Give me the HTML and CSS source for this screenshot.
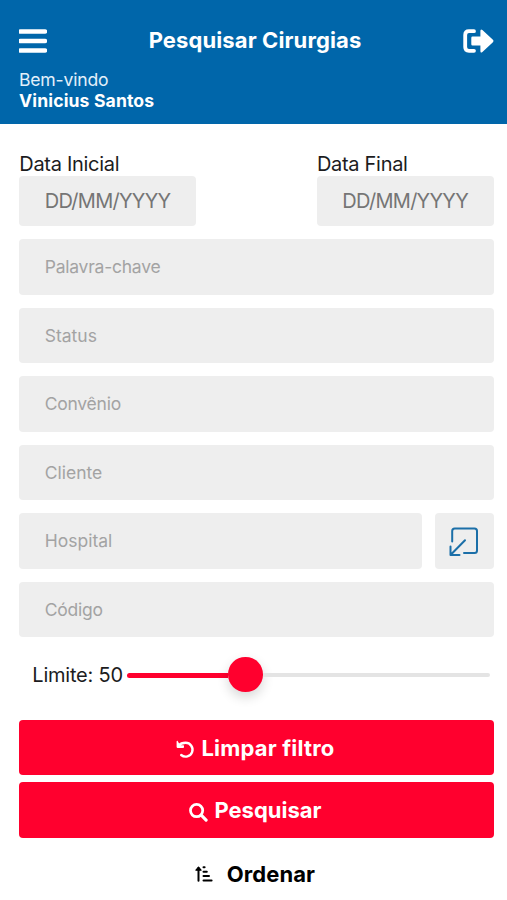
FILE: index.html
```html
<!DOCTYPE html>
<html lang="pt-BR">
<head>
<meta charset="utf-8">
<title>Pesquisar Cirurgias</title>
<link rel="stylesheet" href="styles.css">
</head>
<body>
<header class="header">
  <div class="bar">
    <svg class="menu" viewBox="0 0 28 24"><path d="M1.5 2.5H26M1.5 12H26M1.5 21.5H26" stroke="#fff" stroke-width="4.6" stroke-linecap="round"/></svg>
    <h1 class="title">Pesquisar Cirurgias</h1>
    <svg class="logout" viewBox="0 0 31 24"><path d="M11 2.2H6Q2.2 2.2 2.2 6V18Q2.2 21.8 6 21.8H11" fill="none" stroke="#fff" stroke-width="3.8" stroke-linecap="round"/><path d="M9.5 7.4H17.4V2Q17.4-.5 19.4 1L29.9 10.8Q31 12 29.9 13.2L19.4 23Q17.4 24.5 17.4 22V16.6H9.5Q8.3 16.6 8.3 15.3V8.7Q8.3 7.4 9.5 7.4Z" fill="#fff"/></svg>
  </div>
  <div class="hello">Bem-vindo</div>
  <div class="user">Vinicius Santos</div>
</header>
<main class="form">
  <div class="dates">
    <div class="date"><div class="label">Data Inicial</div><div class="date-field">DD/MM/YYYY</div></div>
    <div class="date"><div class="label">Data Final</div><div class="date-field">DD/MM/YYYY</div></div>
  </div>
  <div class="fields">
    <div class="field tight">Palavra-chave</div>
    <div class="field">Status</div>
    <div class="field tight">Convênio</div>
    <div class="field">Cliente</div>
    <div class="row">
      <div class="field grow">Hospital</div>
      <div class="field pick"><svg class="resize" viewBox="0 0 30 30"><path d="M3.2 14.5V4Q3.2 1.5 5.7 1.5H25.5Q28 1.5 28 4V23.5Q28 26 25.5 26H15M16 13.2L1.5 28M1.5 19.5V28H10.5" fill="none" stroke="#1b6fa8" stroke-width="2" stroke-linecap="round" stroke-linejoin="round"/></svg></div>
    </div>
    <div class="field tight">Código</div>
  </div>
  <div class="limit">
    <span class="limit-text">Limite: 50</span>
    <div class="track"><div class="fill"></div><div class="thumb"></div><div class="rest"></div></div>
  </div>
  <div class="actions">
    <div class="btn"><svg class="undo" viewBox="0 0 19 19"><path d="M2.3 5.8Q5 2.8 9.6 2.8A6.9 6.9 0 1 1 5.2 15" fill="none" stroke="#fff" stroke-width="2.4" stroke-linecap="round"/><path d="M.6 1.6Q.6.7 1.5.8L3.1 3.4L5.2 5.2H7.4Q8.1 5.3 8 6.2V7.2Q7.9 7.9 7.1 7.9H1.4Q.6 7.9.6 7.1Z" fill="#fff"/></svg><span class="b-clear">Limpar filtro</span></div>
    <div class="btn"><svg class="search" viewBox="0 0 18 18"><circle cx="7.2" cy="7.2" r="5.8" fill="none" stroke="#fff" stroke-width="2.6"/><path d="M11.6 11.6L16.2 16.2" stroke="#fff" stroke-width="3" stroke-linecap="round"/></svg><span class="b-search">Pesquisar</span></div>
  </div>
  <div class="sort"><svg class="order" viewBox="0 0 18 16"><path d="M3.5 14.8V2M8.5 1.3H9.6M8.5 5.7H11.8M8.5 10H14M8.5 14.4H16.6" fill="none" stroke="#000" stroke-width="2" stroke-linecap="round"/><path d="M.9 4.2L3.5 1L6.1 4.2Z" stroke="#000" stroke-width="1.1" stroke-linejoin="round"/></svg><span>Ordenar</span></div>
</main>
</body>
</html>
```
FILE: styles.css
```css
* { box-sizing: border-box; }
body { margin: 0; width: 507px; height: 900px; overflow: hidden; background: #fff; font-family: Inter, "Liberation Sans", sans-serif; color: #1c1c1e; }
svg { display: block; flex: none; }
span { white-space: nowrap; }
.header { height: 124.4px; padding: 22px 13px 0 19px; background: #0066aa; color: #fff; }
.bar { display: flex; align-items: center; justify-content: space-between; height: 37px; }
.menu { width: 28px; height: 24px; }
.logout { width: 31px; height: 24px; }
.title { margin: 0; font-size: 22px; line-height: 36px; font-weight: 700; height: 37px; letter-spacing: .11px; white-space: nowrap; }
.hello { margin-top: 10px; font-size: 17.6px; line-height: 21px; letter-spacing: -.2px; color: #e3f0fa; }
.user { font-size: 17.6px; line-height: 22px; font-weight: 700; letter-spacing: .13px; }
.form { padding: 28px 13.4px 0 19.3px; }
.dates { display: flex; justify-content: space-between; }
.date { width: 176.7px; }
.label { height: 23.6px; font-size: 20px; line-height: 24px; letter-spacing: -.3px; white-space: nowrap; }
.date-field { display: flex; align-items: center; height: 50.4px; padding-left: 25.4px; border-radius: 4px; background: #eee; color: #757575; font-size: 20px; letter-spacing: -.72px; }
.fields { display: flex; flex-direction: column; gap: 13px; margin-top: 12.9px; }
.field { display: flex; align-items: center; height: 55.5px; padding: 0 0 1px 25.4px; border-radius: 4px; background: #eee; color: #a3a3a3; font-size: 17.5px; }
.tight { letter-spacing: -.23px; }
.row { display: flex; gap: 13px; }
.grow { flex: 1; }
.pick { width: 58.5px; padding: 2px 0 0; justify-content: center; }
.resize { width: 30px; height: 30px; }
.limit { display: flex; align-items: center; height: 76px; padding: 0 3.5px 0 13px; }
.limit-text { width: 95px; font-size: 20px; letter-spacing: -.22px; }
.track { display: flex; align-items: center; flex: 1; }
.fill { width: 101px; height: 5px; border-radius: 3px 0 0 3px; background: #ff002e; }
.thumb { width: 34.5px; height: 34.5px; margin-top: -2px; border-radius: 50%; background: #ff002e; box-shadow: 0 5px 12px rgba(0,0,0,.16); }
.rest { flex: 1; height: 4px; border-radius: 0 2px 2px 0; background: #e4e4e4; }
.actions { display: flex; flex-direction: column; gap: 7px; margin-top: 6.5px; }
.btn { display: flex; align-items: center; justify-content: center; gap: 6px; height: 55.5px; padding-right: 2px; border-radius: 4px; background: #ff002e; color: #fff; font-size: 22px; font-weight: 700; }
.undo, .search { width: 19px; height: 19px; margin-top: 4px; }
.b-clear { letter-spacing: .18px; }
.sort { display: flex; align-items: center; justify-content: center; gap: 14px; height: 73px; padding-right: 3px; color: #000; font-size: 22px; font-weight: 700; letter-spacing: .1px; }
.order { width: 18px; height: 16px; }
```
